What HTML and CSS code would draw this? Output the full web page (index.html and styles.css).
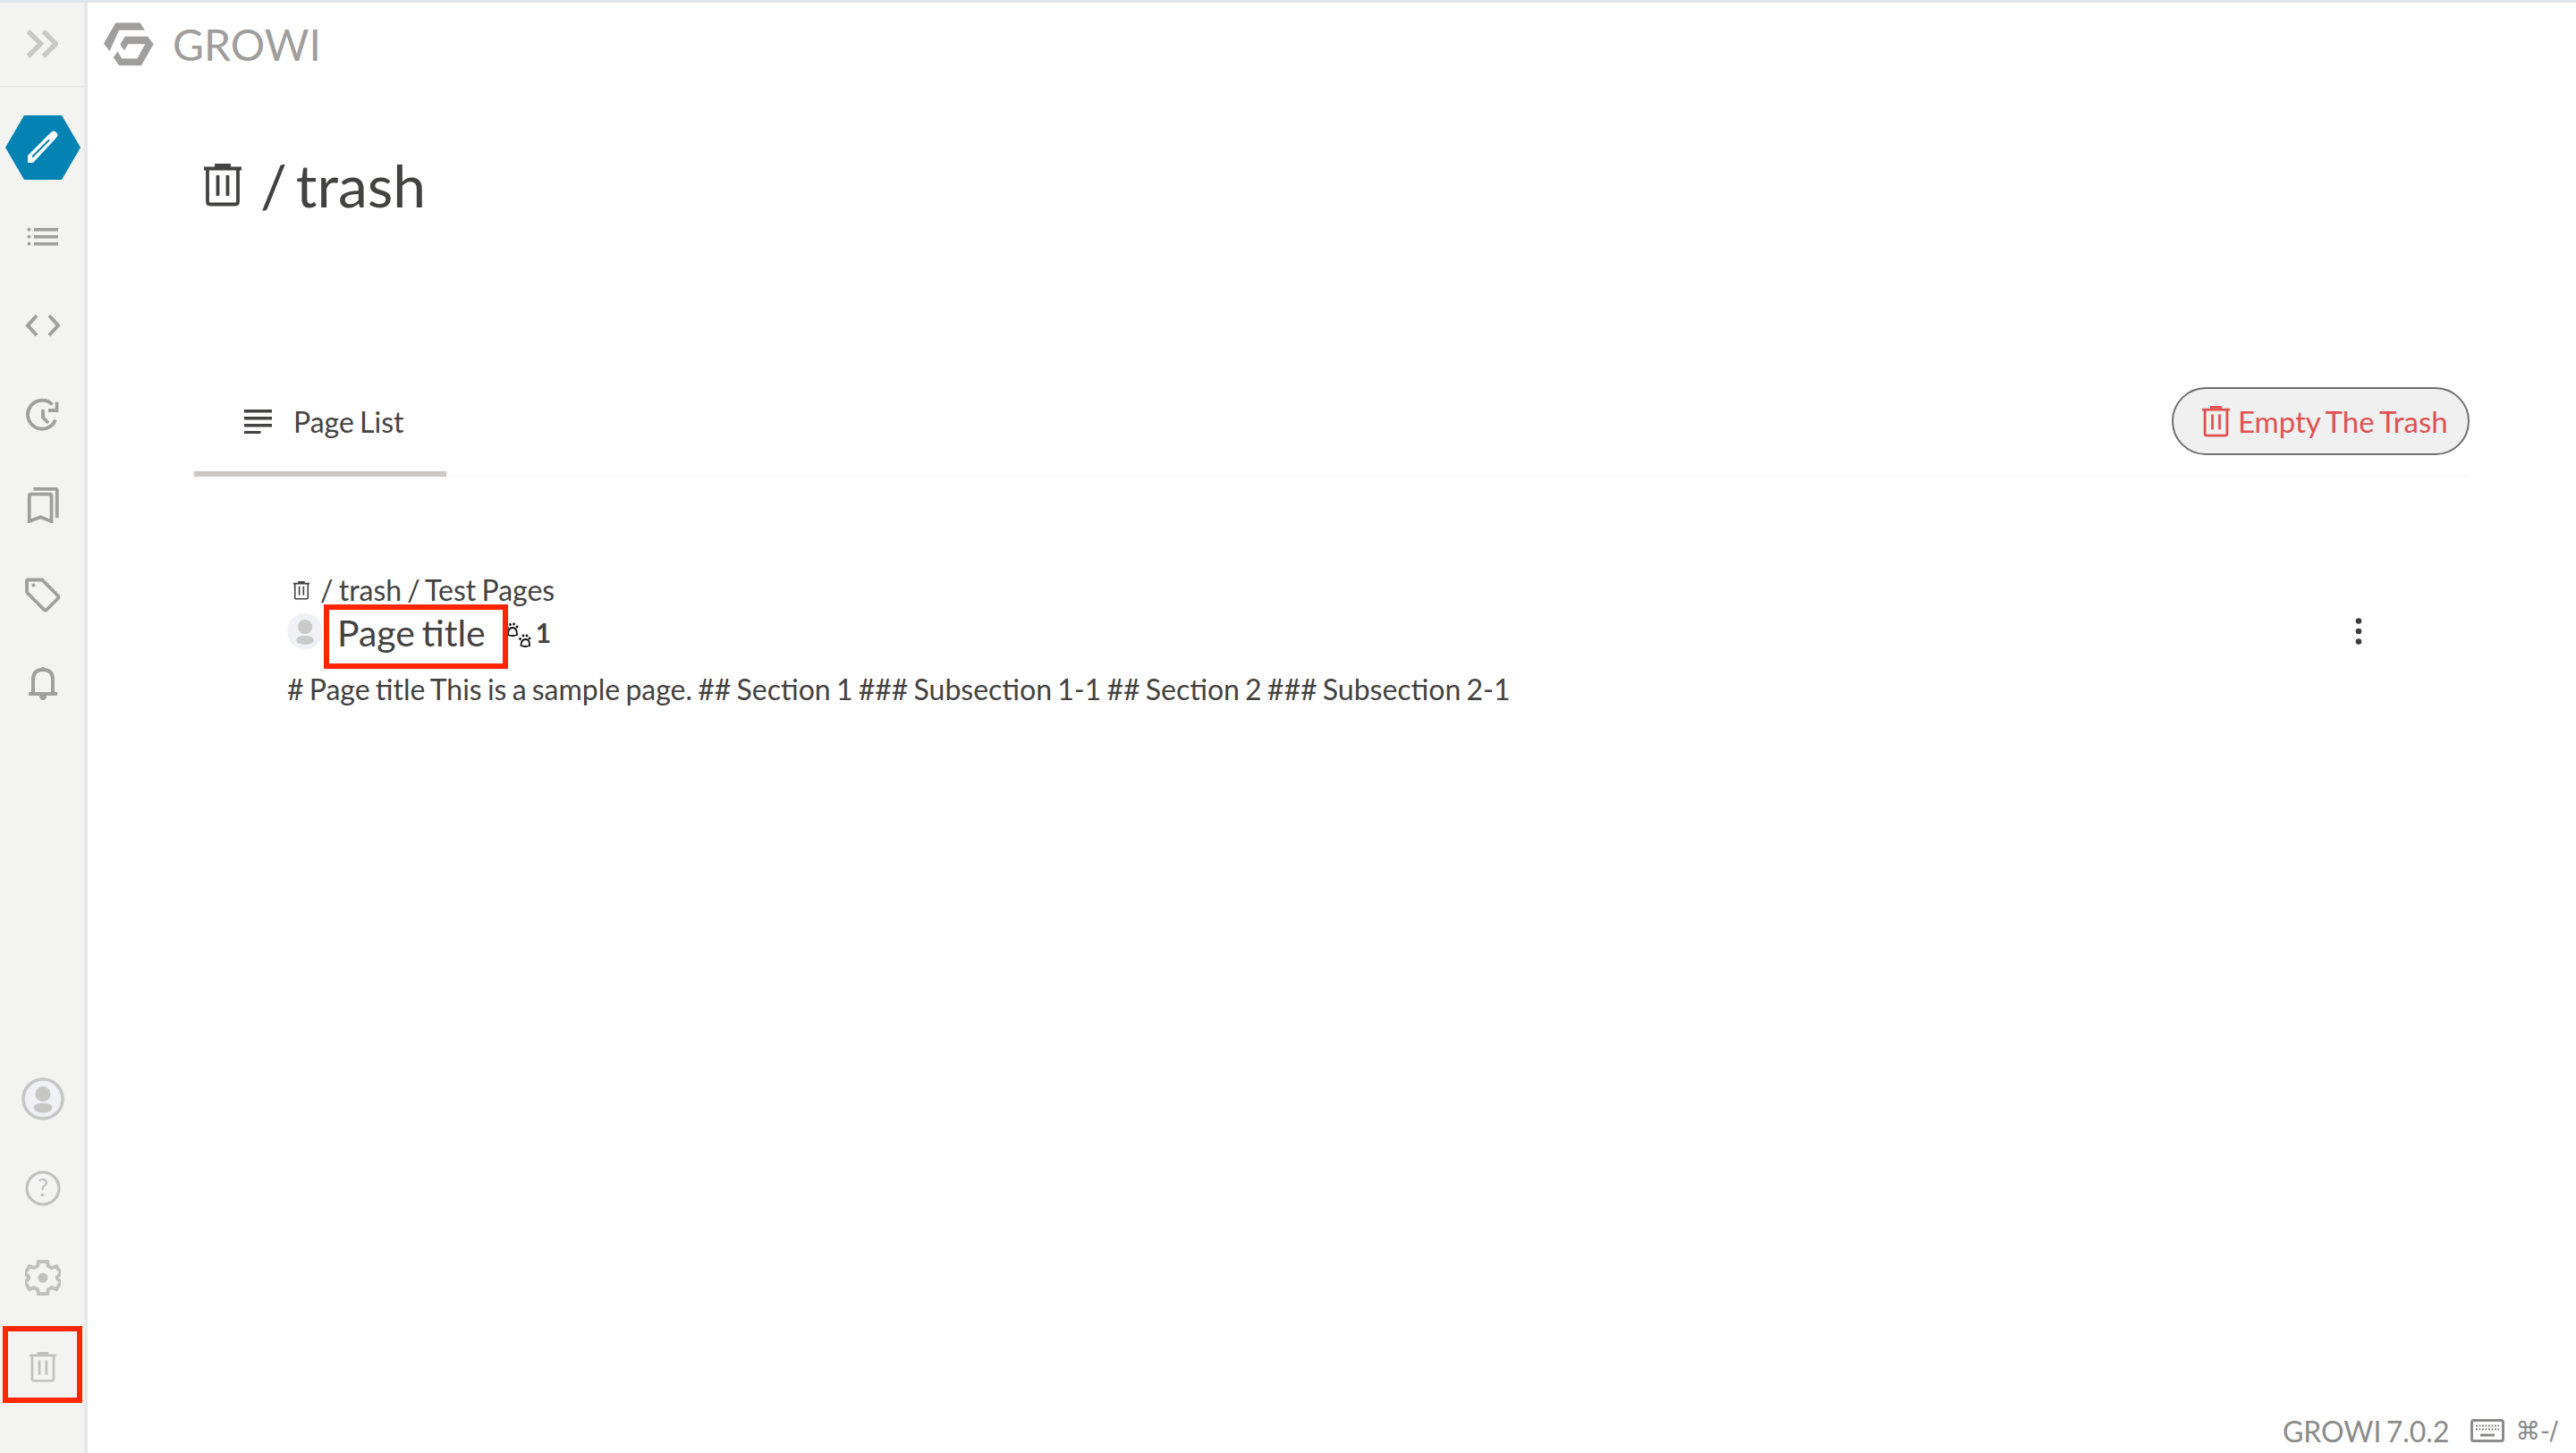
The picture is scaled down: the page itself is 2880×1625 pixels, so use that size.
FILE: index.html
```html
<!DOCTYPE html>
<html lang="en">
<head>
<meta charset="utf-8">
<title>GROWI</title>
<link rel="stylesheet" href="styles.css">
</head>
<body>
<svg class="sprite" width="0" height="0">
  <symbol id="trash" viewBox="0 0 42 48">
    <path d="M0 5.500h42M14 4V1.500h14V4M4 6v36.500q0 3 3 3h28q3 0 3-3V6M15.500 13v23M26.500 13v23" fill="none" stroke="currentColor" stroke-width="3.800"/>
  </symbol>
</svg>
<div class="app">
  <aside class="sidebar">
    <div class="side-top">
      <svg class="ic-chev" viewBox="0 0 36 32"><path d="M2.500 2l14 14-14 14M19.500 2l14 14-14 14" fill="none" stroke="#c8c8c6" stroke-width="5.500"/></svg>
    </div>
    <nav class="side-nav">
      <div class="side-item side-create">
        <svg class="ic-hex" viewBox="0 0 84 72"><path d="M21 0h42l21 36-21 36H21L0 36z" fill="#0382b4"/><path d="M25 53V45L51 19q3-3 6 0q3 3 0 6L31 53z" fill="#fff"/><path d="M30 46.500L49 27.500" stroke="#0382b4" stroke-width="2"/></svg>
      </div>
      <div class="side-item">
        <svg class="ic" viewBox="-2 -7 40 40"><g fill="#9f9f9d"><circle cx="2.500" cy="4.800" r="2"/><circle cx="2.500" cy="12.800" r="2"/><circle cx="2.500" cy="20.800" r="2"/><rect x="8" y="3" width="27" height="3.600"/><rect x="8" y="11" width="27" height="3.600"/><rect x="8" y="19" width="27" height="3.600"/></g></svg>
      </div>
      <div class="side-item">
        <svg class="ic" viewBox="0 0 40 28"><path d="M13 2L3 13l10 11M27 2l10 11-10 11" fill="none" stroke="#9f9f9d" stroke-width="4"/></svg>
      </div>
      <div class="side-item">
        <svg class="ic" viewBox="-3 -2 40 40"><g fill="none" stroke="#9f9f9d" stroke-width="3.800"><path d="M31 22.500A16 16 0 1 1 27.500 5.500"/><path d="M17 11v9l6 6"/><path d="M32.500 2.500V12H23"/></g></svg>
      </div>
      <div class="side-item">
        <svg class="ic" viewBox="0 0 36 42"><g fill="none" stroke="#9f9f9d" stroke-width="4"><path d="M7 2h26q1.500 0 1.500 1.500V36"/><path d="M2 40V10q0-2 2-2h22q2 0 2 2v30l-13-5z"/></g></svg>
      </div>
      <div class="side-item">
        <svg class="ic" viewBox="0 0 40 40"><path d="M3 3.500h16l18 18q1 1.200 0 2.500L24 37q-1.300 1-2.500 0L3 18.500q-1-1-1-2V5q0-1.500 1-1.500z" fill="none" stroke="#9f9f9d" stroke-width="3.800"/><circle cx="9.500" cy="9.500" r="2" fill="#9f9f9d"/></svg>
      </div>
      <div class="side-item">
        <svg class="ic" viewBox="0 0 32 40"><g fill="none" stroke="#9f9f9d" stroke-width="4"><path d="M0 31h32M5 31V15q0-11 11-11t11 11v16"/></g><path d="M13 5q0-4 3-4t3 4zM12 33h8q0 5-4 5t-4-5z" fill="#9f9f9d"/></svg>
      </div>
    </nav>
    <div class="side-bottom">
      <div class="side-item">
        <svg class="ic-big" viewBox="0 0 48 48"><circle cx="24" cy="24" r="22" fill="#f0f1f4" stroke="#c6c6c5" stroke-width="3.600"/><circle cx="24" cy="18.500" r="8.500" fill="#c6c6c5"/><ellipse cx="24" cy="34" rx="10.500" ry="5.500" fill="#c6c6c5"/></svg>
      </div>
      <div class="side-item">
        <svg class="ic" viewBox="0 0 40 40"><circle cx="20" cy="20" r="18" fill="none" stroke="#c0c0bf" stroke-width="3.200"/><text class="qmark" x="20" y="29" text-anchor="middle">?</text></svg>
      </div>
      <div class="side-item">
        <svg class="ic" viewBox="0 0 40 40"><path d="M15 2h10l1 5 4 2 5-2 5 8-4 4v2l4 4-5 8-5-2-4 2-1 5H15l-1-5-4-2-5 2-5-8 4-4v-2l-4-4 5-8 5 2 4-2z" fill="none" stroke="#c0c0bf" stroke-width="4"/><circle cx="20" cy="20" r="5.500" fill="#c0c0bf"/></svg>
      </div>
      <div class="side-item side-trash">
        <svg class="ic-trash-side"><use href="#trash"/></svg>
      </div>
    </div>
  </aside>

  <main class="main">
    <header class="brand">
      <svg class="logo" viewBox="349 74 168 146"><g fill="#9f9e9c"><path d="M389 75h82l16 25h-87l-31 70-20-25z"/><path d="M420 121h76l20 25-41 72h-74l-20-27 15-20 13 24h52l27-49h-57l-13 22-14-20z"/></g></svg>
      <span class="brand-name">GROWI</span>
    </header>

    <div class="content">
      <h1 class="page-title"><svg class="title-trash"><use href="#trash"/></svg><span>/ trash</span></h1>

      <div class="tabs">
        <div class="tab">
          <svg class="tab-ic" viewBox="0 0 32 28"><g fill="#444240"><rect width="31" height="3.500" y="1"/><rect width="31" height="3.500" y="9"/><rect width="31" height="3.500" y="17"/><rect width="18.500" height="3.500" y="25"/></g></svg>
          <span>Page List</span>
        </div>
        <button class="empty-btn"><svg class="btn-trash"><use href="#trash"/></svg><span>Empty The Trash</span></button>
      </div>

      <section class="result">
        <div class="crumb"><svg class="crumb-trash"><use href="#trash"/></svg><span>/ trash / Test Pages</span></div>
        <div class="row">
          <svg class="avatar" viewBox="0 0 40 40"><circle cx="20" cy="20" r="20" fill="#f0f1f4"/><circle cx="20" cy="15" r="8" fill="#cacaca"/><ellipse cx="20" cy="30" rx="10" ry="5" fill="#cacaca"/></svg>
          <a class="row-title">Page title</a>
          <svg class="paw" viewBox="0 0 29 29"><g fill="none" stroke="#111" stroke-width="1.800"><path d="M3 14q0-8 5-8t5 8q-5 2-10 0z"/><path d="M17.500 26q0-7 5-7t4.500 7q-5 2-9.500 0z"/></g><g fill="#111"><circle cx="2.500" cy="6" r="1.400"/><circle cx="5.500" cy="2.500" r="1.400"/><circle cx="9.500" cy="2" r="1.400"/><circle cx="13" cy="5" r="1.400"/><circle cx="16.500" cy="18.500" r="1.400"/><circle cx="20" cy="15" r="1.400"/><circle cx="24" cy="15" r="1.400"/><circle cx="27" cy="18" r="1.400"/></g></svg>
          <b class="count">1</b>
          <svg class="dots" viewBox="0 0 8 30"><g fill="#3f3c3a"><circle cx="4" cy="3.500" r="3.300"/><circle cx="4" cy="15" r="3.300"/><circle cx="4" cy="26.500" r="3.300"/></g></svg>
        </div>
        <p class="snippet"># Page title This is a sample page. ## Section 1 ### Subsection 1-1 ## Section 2 ### Subsection 2-1</p>
      </section>
    </div>

    <footer class="foot">
      <span class="ver">GROWI 7.0.2</span>
      <svg class="kbd" viewBox="0 0 38 26"><rect x="1.500" y="1.500" width="35" height="23" rx="2" fill="none" stroke="#8b8b89" stroke-width="3"/><path d="M6 7.500h26M6 11.500h26" stroke="#8b8b89" stroke-width="2" stroke-dasharray="2 1.500"/><path d="M11 18h16" stroke="#8b8b89" stroke-width="3"/></svg>
      <span class="keys">⌘-/</span>
    </footer>
  </main>
</div>
</body>
</html>
```
FILE: styles.css
```css
* { box-sizing: border-box; }
html, body { margin: 0; height: 100%; }
body { font-family: Lato, "Noto Sans", sans-serif; color: #444240; background: #fff; overflow: hidden; word-spacing: -2px; }
.sprite { position: absolute; }
.app { display: flex; height: 100vh; border-top: 3px solid #dfe6ea; }

.sidebar { width: 98px; flex: none; display: flex; flex-direction: column; background: #f3f3f2; border-right: 4px solid #e8e8e7; }
.side-top { height: 95px; display: flex; align-items: center; justify-content: center; border-bottom: 2px solid #e8e8e7; margin-right: -4px; }
.ic-chev { width: 36px; height: 32px; margin-right: 4px; margin-top: -2px; }
.side-nav { padding-top: 17px; display: flex; flex-direction: column; }
.side-item { height: 100px; padding-left: 2px; display: flex; align-items: center; justify-content: center; }
.side-create { padding-left: 1px; }
.ic-hex { width: 84px; height: 72px; }
.ic { width: 40px; height: 40px; }
.ic-big { width: 48px; height: 48px; }
.qmark { font-family: Lato, sans-serif; font-size: 26px; fill: #c0c0bf; }
.side-bottom { margin-top: auto; padding-bottom: 46px; display: flex; flex-direction: column; }
.side-trash { position: relative; }
.side-trash::after { content: ""; position: absolute; left: 3px; right: 2px; top: 4px; bottom: 10px; border: 6px solid #ff2600; }
.ic-trash-side { width: 30px; height: 34px; color: #c0c0bf; }

.main { flex: 1; min-width: 0; display: flex; flex-direction: column; }
.brand { height: 48px; margin-top: 22px; padding-left: 18px; display: flex; align-items: center; gap: 21px; }
.logo { width: 56px; height: 49px; }
.brand-name { font-size: 48px; color: #9f9e9c; }

.content { flex: 1; padding: 0 119px; }
.page-title { margin: 89px 0 0; padding-left: 11px; height: 90px; display: flex; align-items: center; gap: 21px; font-size: 66px; font-weight: 400; line-height: 90px; color: #444240; word-spacing: -7px; }
.title-trash { width: 42px; height: 48px; }

.tabs { margin-top: 181px; height: 101px; display: flex; justify-content: space-between; align-items: flex-start; border-bottom: 2px solid #f8f8f8; }
.tab { width: 282px; height: 100px; border-bottom: 6px solid #ccc9c5; display: flex; align-items: center; padding: 0 0 18px 56px; gap: 23px; font-size: 32px; }
.tab-ic { width: 32px; height: 28px; }
.empty-btn { width: 333px; height: 76px; border-radius: 38px; border: 2px solid #707070; background: #f0f0f0; color: #e25050; font: inherit; font-size: 33px; word-spacing: -2px; display: flex; align-items: center; gap: 9px; padding: 0 0 0 32px; }
.btn-trash { width: 31px; height: 35px; }

.result { padding: 106px 0 0 104px; }
.crumb { display: flex; align-items: center; gap: 12px; padding-left: 7px; font-size: 32px; line-height: 40px; height: 40px; }
.crumb-trash { width: 18px; height: 21px; }
.row { display: flex; align-items: center; height: 42px; margin-top: 5px; padding-right: 120px; }
.avatar { width: 40px; height: 40px; flex: none; }
.row-title { position: relative; margin: 3px 0 0 16px; font-size: 41px; line-height: 42px; word-spacing: -3px; }
.row-title::after { content: ""; position: absolute; left: -15px; right: -25px; top: -11px; bottom: -19px; border: 6px solid #ff2600; }
.paw { width: 29px; height: 29px; margin: 9px 0 0 22px; }
.count { margin: 2px 0 0 5px; font-size: 30px; }
.dots { width: 8px; height: 30px; margin-left: auto; }
.snippet { margin: 24px 0 0; font-size: 32px; line-height: 40px; }

.foot { height: 50px; padding-right: 20px; display: flex; align-items: center; justify-content: flex-end; gap: 24px; font-size: 32px; color: #8b8b89; }
.ver { word-spacing: -3px; }
.kbd { width: 38px; height: 26px; }
.keys { margin-left: -12px; font-family: "DejaVu Sans", Lato, sans-serif; font-size: 28px; }
```
